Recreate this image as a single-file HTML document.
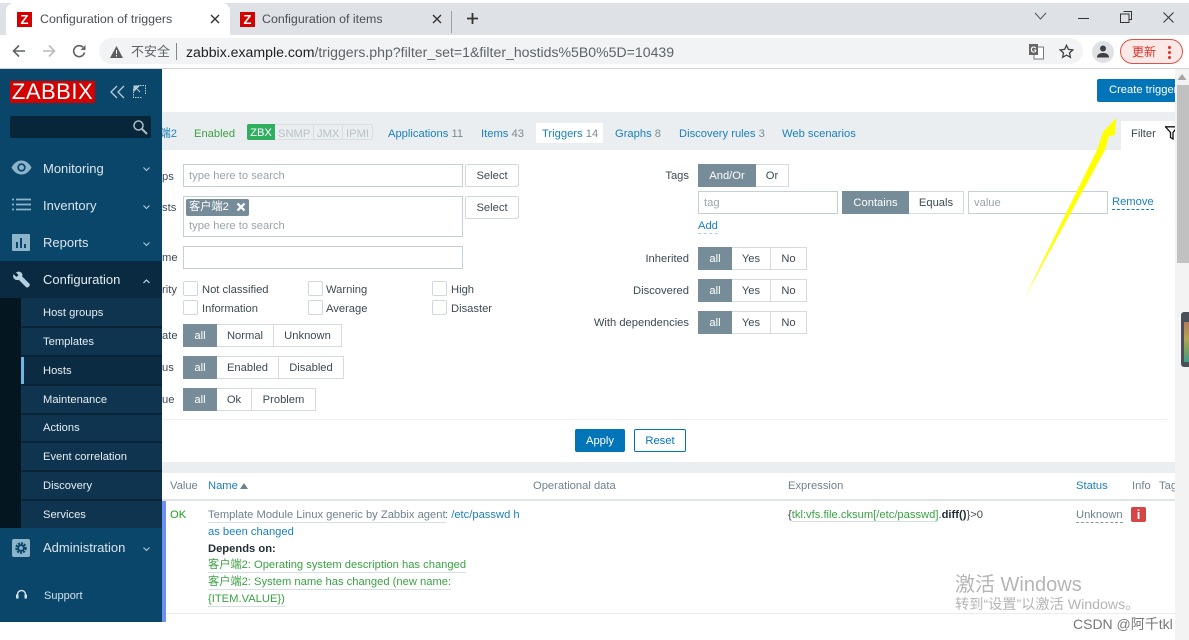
<!DOCTYPE html>
<html lang="zh">
<head>
<meta charset="utf-8">
<title>Configuration of triggers</title>
<style>
html,body{margin:0;padding:0;background:#fff;}
body{width:1189px;height:640px;position:relative;overflow:hidden;font-family:"Liberation Sans","Noto Sans CJK SC",sans-serif;font-size:11.2px;color:#1f2c33;}
.a{position:absolute;white-space:nowrap;}
.box{position:absolute;box-sizing:border-box;background:#fff;border:1px solid #c5d0d6;}
.ph{color:#9aa5ab;margin-top:1px;}
.lbl{position:absolute;white-space:nowrap;color:#3d4a52;line-height:14px;margin-top:1px;}
.seg{position:absolute;display:flex;height:23px;box-sizing:border-box;border-radius:2px;}
.seg span{box-sizing:border-box;height:23px;line-height:22px;text-align:center;border:1px solid #d4dce0;border-left:0;background:#fff;color:#3d4a52;}
.seg span.on{background:#768d99;border:1px solid #768d99;color:#fff;}
.btn{position:absolute;box-sizing:border-box;height:23px;line-height:22px;text-align:center;background:#fff;border:1px solid #cfd8dc;border-radius:2px;color:#3d4a52;}
.cb{position:absolute;box-sizing:border-box;width:15px;height:15px;background:#fff;border:1px solid #cfd8dc;border-radius:2px;}
.tabt{position:absolute;top:127px;line-height:14px;color:#1a80bd;white-space:nowrap;}
.tabt i{font-style:normal;color:#7d8b93;}
.m{position:absolute;left:43px;color:#dbe6ec;font-size:13px;line-height:16px;white-space:nowrap;}
.s{position:absolute;left:43px;color:#e6eef2;font-size:11.2px;line-height:14px;white-space:nowrap;}
.sb{position:absolute;left:21px;width:141px;height:2px;background:#0a2436;}
.th{position:absolute;top:479px;line-height:14px;color:#6f8290;white-space:nowrap;}
.gl{position:absolute;left:208px;color:#3aa243;line-height:14px;white-space:nowrap;border-bottom:1px solid #d6dfe3;}
</style>
</head>
<body>
<!-- browser tab strip -->
<div class="a" style="left:0;top:3px;width:1189px;height:32px;background:#dee1e6;"></div>
<div class="a" style="left:6px;top:3px;width:224px;height:32px;background:#fff;border-radius:8px 8px 0 0;"></div>
<div class="a" style="left:17px;top:12px;width:15px;height:15px;background:#d40000;color:#fff;font:bold 13px/15px 'Liberation Sans',sans-serif;text-align:center;">Z</div>
<div class="a" style="left:40px;top:12px;font-size:12.4px;line-height:14px;color:#4a4f55;">Configuration of triggers</div>
<svg class="a" style="left:210px;top:14px" width="10" height="10" viewBox="0 0 10 10"><path d="M1 1l8 8M9 1l-8 8" stroke="#333" stroke-width="1.4"/></svg>
<div class="a" style="left:240px;top:12px;width:15px;height:15px;background:#d40000;color:#fff;font:bold 13px/15px 'Liberation Sans',sans-serif;text-align:center;">Z</div>
<div class="a" style="left:262px;top:12px;font-size:12.4px;line-height:14px;color:#4a4f55;">Configuration of items</div>
<svg class="a" style="left:432px;top:14px" width="10" height="10" viewBox="0 0 10 10"><path d="M1 1l8 8M9 1l-8 8" stroke="#333" stroke-width="1.4"/></svg>
<div class="a" style="left:451px;top:11px;width:1px;height:22px;background:#9aa0a6;"></div>
<svg class="a" style="left:466px;top:12px" width="13" height="13" viewBox="0 0 13 13"><path d="M6.500 1v11M1 6.500h11" stroke="#333" stroke-width="1.800"/></svg>
<svg class="a" style="left:1034px;top:12px" width="13" height="9" viewBox="0 0 13 9"><path d="M1 1l5.500 6L12 1" fill="none" stroke="#555" stroke-width="1"/></svg>
<div class="a" style="left:1078px;top:18px;width:11px;height:1px;background:#333;"></div>
<svg class="a" style="left:1120px;top:11px" width="12" height="12" viewBox="0 0 12 12"><path d="M3.500 .5h8v8h-2M.5 3h8.500v8.500H.5z" fill="none" stroke="#333"/></svg>
<svg class="a" style="left:1163px;top:12px" width="11" height="11" viewBox="0 0 11 11"><path d="M.5 .5l10 10M10.500 .5l-10 10" stroke="#333" stroke-width="1"/></svg>

<!-- toolbar -->
<div class="a" style="left:0;top:35px;width:1189px;height:33px;background:#fff;"></div>
<div class="a" style="left:0;top:68px;width:1189px;height:1px;background:#d0d2d5;"></div>
<svg class="a" style="left:12px;top:44px" width="14" height="14" viewBox="0 0 14 14"><path d="M13 7H2M7 1.500L1.500 7 7 12.500" fill="none" stroke="#5f6368" stroke-width="1.600"/></svg>
<svg class="a" style="left:42px;top:44px" width="14" height="14" viewBox="0 0 14 14"><path d="M1 7h11M7 1.500L12.500 7 7 12.500" fill="none" stroke="#b8bbbf" stroke-width="1.600"/></svg>
<svg class="a" style="left:72px;top:44px" width="15" height="15" viewBox="0 0 15 15"><path d="M12.500 8.500A5.500 5.500 0 1 1 11 3.200" fill="none" stroke="#5f6368" stroke-width="1.600"/><path d="M13.500 1v5h-5z" fill="#5f6368"/></svg>
<div class="a" style="left:99px;top:38px;width:984px;height:26px;background:#f1f3f4;border-radius:13px;"></div>
<svg class="a" style="left:110px;top:46px" width="13" height="12" viewBox="0 0 13 12"><path d="M6.500 0L13 12H0z" fill="#5a5e63"/><path d="M6 4h1v4H6zM6 9h1v1.500H6z" fill="#fff"/></svg>
<div class="a" style="left:131px;top:44px;font-size:13px;line-height:16px;color:#5f6368;">不安全</div>
<div class="a" style="left:176px;top:43px;width:1px;height:17px;background:#80868b;"></div>
<div class="a" style="left:186px;top:43px;font-size:14.1px;line-height:18px;color:#5f6368;"><span style="color:#202124">zabbix.example.com</span>/triggers.php?filter_set=1&amp;filter_hostids%5B0%5D=10439</div>
<svg class="a" style="left:1029px;top:44px" width="15" height="16" viewBox="0 0 15 16"><rect x="5" y="3" width="9.500" height="12" fill="#fff" stroke="#777"/><rect x="0" y="0" width="9" height="11" fill="#666"/><text x="1.500" y="8.500" font-size="8" font-weight="bold" fill="#fff" font-family="Liberation Sans">G</text></svg>
<svg class="a" style="left:1059px;top:44px" width="15" height="15" viewBox="0 0 15 15"><path d="M7.500 1.300l1.900 4.100 4.400.5-3.300 3 .9 4.400-3.900-2.200-3.900 2.200.9-4.400-3.300-3 4.400-.5z" fill="none" stroke="#444" stroke-width="1.300"/></svg>
<div class="a" style="left:1092px;top:41px;width:22px;height:22px;border-radius:50%;background:#dfe1e5;"></div>
<svg class="a" style="left:1097px;top:45px" width="12" height="13" viewBox="0 0 12 13"><circle cx="6" cy="3.500" r="3" fill="#3c4043"/><path d="M0 12.500c0-3.500 3-4.500 6-4.500s6 1 6 4.500z" fill="#3c4043"/></svg>
<div class="a" style="left:1120px;top:39px;width:63px;height:25px;box-sizing:border-box;border:1px solid #d9534a;border-radius:13px;background:#fbe9e7;"></div>
<div class="a" style="left:1132px;top:44px;font-size:12px;line-height:16px;color:#d93025;">更新</div>
<div class="a" style="left:1168px;top:46px;width:3px;height:3px;border-radius:50%;background:#d93025;box-shadow:0 5px 0 #d93025,0 10px 0 #d93025;"></div>

<!-- top white area, filter header band -->
<div class="a" style="left:162px;top:112px;width:1013px;height:38px;background:#ebeef0;"></div>
<div class="a" style="left:1097px;top:79px;width:78px;height:23px;background:#0275b8;border-radius:2px 0 0 2px;"></div>
<div class="a" style="left:1097px;top:79px;width:78px;height:23px;overflow:hidden;"><span class="a" style="left:12px;top:4px;color:#fff;font-size:11.2px;line-height:14px;">Create trigger</span></div>

<div class="tabt" style="left:162px;color:#1a80bd;width:15px;overflow:hidden;direction:rtl;">端2</div>
<div class="tabt" style="left:194px;color:#3aa243;">Enabled</div>
<div class="a" style="left:247px;top:124px;width:126px;height:16px;box-sizing:border-box;border:1px solid #d8dee1;border-radius:2px;"></div>
<div class="a" style="left:247px;top:124px;width:28px;height:16px;background:#2fae5f;color:#fff;text-align:center;line-height:18px;border-radius:2px 0 0 2px;">ZBX</div>
<div class="a" style="left:278px;top:127px;line-height:14px;color:#b9c2c7;">SNMP</div>
<div class="a" style="left:313px;top:125px;width:1px;height:14px;background:#d8dee1;"></div>
<div class="a" style="left:317px;top:127px;line-height:14px;color:#b9c2c7;">JMX</div>
<div class="a" style="left:342px;top:125px;width:1px;height:14px;background:#d8dee1;"></div>
<div class="a" style="left:346px;top:127px;line-height:14px;color:#b9c2c7;">IPMI</div>
<div class="tabt" style="left:388px;">Applications <i>11</i></div>
<div class="tabt" style="left:481px;">Items <i>43</i></div>
<div class="a" style="left:536px;top:123px;width:67px;height:20px;background:#fff;"></div>
<div class="tabt" style="left:542px;">Triggers <i>14</i></div>
<div class="tabt" style="left:615px;">Graphs <i>8</i></div>
<div class="tabt" style="left:679px;">Discovery rules <i>3</i></div>
<div class="tabt" style="left:782px;">Web scenarios</div>
<div class="a" style="left:1121px;top:121px;width:54px;height:29px;background:#fff;"></div>
<div class="a" style="left:1131px;top:127px;line-height:14px;color:#3d4a52;">Filter</div>
<svg class="a" style="left:1165px;top:126px" width="10" height="14" viewBox="0 0 10 14"><path d="M.5 .8h12L8 6.500V13L5.500 11.500v-5z" fill="none" stroke="#111" stroke-width="1.300"/></svg>

<!-- filter left -->
<div class="lbl" style="left:162px;top:169px;">ps</div>
<div class="box" style="left:183px;top:164px;width:280px;height:23px;"></div>
<div class="a ph" style="left:189px;top:168px;line-height:14px;">type here to search</div>
<div class="btn" style="left:465px;top:164px;width:54px;">Select</div>
<div class="lbl" style="left:162px;top:200px;">sts</div>
<div class="box" style="left:183px;top:196px;width:280px;height:41px;"></div>
<div class="a" style="left:186px;top:199px;width:63px;height:17px;background:#768d99;border-radius:2px;color:#fff;line-height:16px;"><span style="margin-left:3px;">客户端2</span></div>
<svg class="a" style="left:236px;top:202px" width="10" height="10" viewBox="0 0 10 10"><path d="M1.500 1.500l7 7M8.500 1.500l-7 7" stroke="#fff" stroke-width="2.200"/></svg>
<div class="a ph" style="left:189px;top:218px;line-height:14px;">type here to search</div>
<div class="btn" style="left:465px;top:196px;width:54px;">Select</div>
<div class="lbl" style="left:162px;top:250px;">me</div>
<div class="box" style="left:183px;top:246px;width:280px;height:23px;"></div>
<div class="lbl" style="left:162px;top:282px;">rity</div>
<div class="cb" style="left:183px;top:281px;"></div><div class="lbl" style="left:202px;top:282px;">Not classified</div>
<div class="cb" style="left:308px;top:281px;"></div><div class="lbl" style="left:326px;top:282px;">Warning</div>
<div class="cb" style="left:432px;top:281px;"></div><div class="lbl" style="left:451px;top:282px;">High</div>
<div class="cb" style="left:183px;top:300px;"></div><div class="lbl" style="left:202px;top:301px;">Information</div>
<div class="cb" style="left:308px;top:300px;"></div><div class="lbl" style="left:326px;top:301px;">Average</div>
<div class="cb" style="left:432px;top:300px;"></div><div class="lbl" style="left:451px;top:301px;">Disaster</div>
<div class="lbl" style="left:162px;top:328px;">ate</div>
<div class="seg" style="left:183px;top:324px;"><span class="on" style="width:34px">all</span><span style="width:57px">Normal</span><span style="width:68px">Unknown</span></div>
<div class="lbl" style="left:162px;top:360px;">us</div>
<div class="seg" style="left:183px;top:356px;"><span class="on" style="width:34px">all</span><span style="width:62px">Enabled</span><span style="width:65px">Disabled</span></div>
<div class="lbl" style="left:162px;top:392px;">ue</div>
<div class="seg" style="left:183px;top:388px;"><span class="on" style="width:34px">all</span><span style="width:35px">Ok</span><span style="width:64px">Problem</span></div>

<!-- filter right -->
<div class="lbl" style="right:500px;top:168px;">Tags</div>
<div class="seg" style="left:698px;top:164px;"><span class="on" style="width:58px">And/Or</span><span style="width:33px">Or</span></div>
<div class="box" style="left:698px;top:191px;width:140px;height:23px;"></div>
<div class="a ph" style="left:704px;top:195px;line-height:14px;">tag</div>
<div class="seg" style="left:842px;top:191px;"><span class="on" style="width:67px">Contains</span><span style="width:55px">Equals</span></div>
<div class="box" style="left:968px;top:191px;width:140px;height:23px;"></div>
<div class="a ph" style="left:974px;top:195px;line-height:14px;">value</div>
<div class="a" style="left:1112px;top:195px;line-height:14px;color:#1a80bd;border-bottom:1px dashed #1a80bd;">Remove</div>
<div class="a" style="left:698px;top:219px;line-height:14px;color:#1a80bd;border-bottom:1px dashed #a9cfe6;">Add</div>
<div class="lbl" style="right:500px;top:251px;">Inherited</div>
<div class="seg" style="left:698px;top:247px;"><span class="on" style="width:34px">all</span><span style="width:39px">Yes</span><span style="width:36px">No</span></div>
<div class="lbl" style="right:500px;top:283px;">Discovered</div>
<div class="seg" style="left:698px;top:279px;"><span class="on" style="width:34px">all</span><span style="width:39px">Yes</span><span style="width:36px">No</span></div>
<div class="lbl" style="right:500px;top:315px;">With dependencies</div>
<div class="seg" style="left:698px;top:311px;"><span class="on" style="width:34px">all</span><span style="width:39px">Yes</span><span style="width:36px">No</span></div>

<div class="a" style="left:162px;top:419px;width:1005px;height:1px;background:#eef1f2;"></div>
<div class="a" style="left:575px;top:429px;width:50px;height:23px;background:#0275b8;border-radius:2px;color:#fff;text-align:center;line-height:24px;">Apply</div>
<div class="a" style="left:634px;top:429px;width:52px;height:23px;box-sizing:border-box;border:1px solid #0275b8;border-radius:2px;color:#0275b8;text-align:center;line-height:22px;">Reset</div>
<div class="a" style="left:162px;top:462px;width:1013px;height:11px;background:#ebeef0;"></div>

<!-- table -->
<div class="th" style="left:170px;">Value</div>
<div class="th" style="left:208px;color:#1a80bd;">Name</div>
<svg class="a" style="left:240px;top:483px" width="8" height="6" viewBox="0 0 8 6"><path d="M4 0l4 6H0z" fill="#6f8290"/></svg>
<div class="th" style="left:533px;">Operational data</div>
<div class="th" style="left:788px;">Expression</div>
<div class="th" style="left:1076px;color:#1a80bd;">Status</div>
<div class="th" style="left:1132px;">Info</div>
<div class="th" style="left:1159px;width:16px;overflow:hidden;">Tags</div>
<div class="a" style="left:162px;top:499px;width:1013px;height:2px;background:#dfe4e7;"></div>
<div class="a" style="left:162px;top:501px;width:4px;height:121px;background:#6d8ff0;"></div>
<div class="a" style="left:166px;top:613px;width:1009px;height:1px;background:#ebeef0;"></div>
<div class="a" style="left:170px;top:508px;line-height:14px;color:#1fa31f;">OK</div>
<div class="a" style="left:208px;top:508px;line-height:14px;color:#6f8290;border-bottom:1px solid #d6dfe3;">Template Module Linux generic by Zabbix agent</div>
<div class="a" style="left:445px;top:508px;line-height:14px;color:#1a80bd;">: /etc/passwd h</div>
<div class="a" style="left:208px;top:525px;line-height:14px;color:#1a80bd;">as been changed</div>
<div class="a" style="left:208px;top:542px;line-height:14px;font-weight:bold;color:#1f2c33;">Depends on:</div>
<div class="gl" style="top:558px;">客户端2: Operating system description has changed</div>
<div class="gl" style="top:575px;">客户端2: System name has changed (new name:</div>
<div class="gl" style="top:592px;">{ITEM.VALUE})</div>
<div class="a" style="left:788px;top:508px;line-height:14px;color:#3d4a52;font-size:11.2px;">{<span style="color:#3aa243;border-bottom:1px solid #d6dfe3;">tkl:vfs.file.cksum[/etc/passwd]</span>.<b style="color:#1f2c33">diff()</b>}&gt;0</div>
<div class="a" style="left:1076px;top:508px;line-height:14px;color:#6f8290;border-bottom:1px dashed #8a9aa3;">Unknown</div>
<div class="a" style="left:1131px;top:507px;width:15px;height:15px;background:#d64545;border-radius:2px;color:#fff;text-align:center;font:bold 13px/15px 'Liberation Sans',sans-serif;">i</div>

<!-- windows + csdn watermark -->
<div class="a" style="left:955px;top:573px;font-size:20px;line-height:24px;color:#b5b5b5;">激活 Windows</div>
<div class="a" style="left:955px;top:597px;font-size:14.2px;line-height:17px;color:#b5b5b5;">转到“设置”以激活 Windows。</div>
<div class="a" style="left:1073px;top:615px;font-size:14px;line-height:18px;color:#777;">CSDN @阿千tkl</div>
<div class="a" style="left:1179px;top:620px;width:6px;height:1px;background:#666;"></div>

<!-- scrollbar -->
<div class="a" style="left:1175px;top:69px;width:14px;height:571px;background:#f3f3f3;"></div>
<div class="a" style="left:1177px;top:85px;width:12px;height:178px;background:#c1c1c1;"></div>
<svg class="a" style="left:1177px;top:74px" width="10" height="6" viewBox="0 0 10 6"><path d="M5 0l4.500 6H.5z" fill="#a5a5a5"/></svg>
<div class="a" style="left:1181px;top:312px;width:8px;height:55px;background:#4a5058;border-radius:3px 0 0 3px;"></div>
<div class="a" style="left:1184px;top:322px;width:5px;height:40px;background:linear-gradient(#c9805a,#c9b24e 40%,#8fb05a 65%,#3cae97);opacity:.85;"></div>

<!-- arrow -->
<svg class="a" style="left:1020px;top:110px" width="105" height="195" viewBox="0 0 105 195"><path d="M96 8L95 25 89 26 85 40 5 187 77 40 81 28 83 22z" fill="#ffff00"/></svg>

<!-- sidebar -->
<div class="a" style="left:0;top:69px;width:162px;height:553px;background:#0a466a;"></div>
<div class="a" style="left:10px;top:81px;width:85px;height:22px;background:#d40000;color:#fff;font-size:22px;line-height:22px;text-align:center;letter-spacing:.5px;overflow:hidden;">ZABBIX</div>
<svg class="a" style="left:110px;top:85px" width="15" height="14" viewBox="0 0 15 14"><path d="M7 1L1 7l6 6M14 1L8 7l6 6" fill="none" stroke="#b9cdd9" stroke-width="1.300"/></svg>
<svg class="a" style="left:133px;top:85px" width="13" height="13" viewBox="0 0 13 13"><path d="M.5 4v8.500H9M12.500 9V.5H5" fill="none" stroke="#b9cdd9" stroke-dasharray="1.500 1"/><path d="M1 1h5L1 6zM2 2l5 5" fill="#b9cdd9" stroke="#b9cdd9"/></svg>
<div class="a" style="left:10px;top:116px;width:141px;height:22px;background:#08263a;border-radius:2px;"></div>
<svg class="a" style="left:132px;top:119px" width="16" height="16" viewBox="0 0 16 16"><circle cx="6.500" cy="6.500" r="4.500" fill="none" stroke="#a9bcc7" stroke-width="1.500"/><path d="M10 10l5 5" stroke="#a9bcc7" stroke-width="2"/></svg>

<svg class="a" style="left:11px;top:160px" width="21" height="15" viewBox="0 0 21 15"><path d="M.5 7.500C3 3 6.500.5 10.500.5s7.500 2.500 10 7c-2.500 4.500-6 7-10 7s-7.500-2.500-10-7z" fill="#8cb4cb"/><circle cx="10.500" cy="7.500" r="4.200" fill="#0a466a"/><circle cx="10.500" cy="7.500" r="2.500" fill="#8cb4cb"/></svg>
<div class="m" style="top:161px;">Monitoring</div>
<svg class="a" style="left:143px;top:167px" width="7" height="5" viewBox="0 0 7 5"><path d="M.5 .5l3 3 3-3" fill="none" stroke="#b9cdd9"/></svg>

<svg class="a" style="left:12px;top:198px" width="19" height="13" viewBox="0 0 19 13"><path d="M0 1.500h2M4 1.500h15M0 6.500h2M4 6.500h15M0 11.500h2M4 11.500h15" stroke="#8cb4cb" stroke-width="1.700"/></svg>
<div class="m" style="top:198px;">Inventory</div>
<svg class="a" style="left:143px;top:205px" width="7" height="5" viewBox="0 0 7 5"><path d="M.5 .5l3 3 3-3" fill="none" stroke="#b9cdd9"/></svg>

<svg class="a" style="left:12px;top:234px" width="18" height="17" viewBox="0 0 18 17"><rect width="18" height="17" rx="1" fill="#8cb4cb"/><path d="M4 8h2v6H4zM8 4h2v10H8zM12 10h2v4h-2z" fill="#0a466a"/></svg>
<div class="m" style="top:235px;">Reports</div>
<svg class="a" style="left:143px;top:242px" width="7" height="5" viewBox="0 0 7 5"><path d="M.5 .5l3 3 3-3" fill="none" stroke="#b9cdd9"/></svg>

<div class="a" style="left:0;top:261px;width:162px;height:37px;background:#092a40;"></div>
<svg class="a" style="left:12px;top:271px" width="18" height="18" viewBox="0 0 18 18"><path d="M4 1.500c2-1.500 5-1 6 1 .5 1 .5 2 .2 3l7 7c.8.800.8 2 0 2.800l-.6.600c-.8.800-2 .8-2.800 0l-7-7c-2.500.8-5-.5-5.600-3-.3-1 0-2 .3-2.700L4.500 6l2-2z" fill="#b5cfde"/></svg>
<div class="m" style="top:272px;color:#e4edf2;">Configuration</div>
<svg class="a" style="left:143px;top:279px" width="7" height="5" viewBox="0 0 7 5"><path d="M.5 4l3-3 3 3" fill="none" stroke="#dbe6ec"/></svg>

<div class="a" style="left:0;top:298px;width:21px;height:230px;background:#04161f;"></div>
<div class="a" style="left:21px;top:298px;width:141px;height:230px;background:#0e344f;"></div>
<div class="a" style="left:21px;top:356px;width:141px;height:28px;background:#0a2b41;"></div>
<div class="a" style="left:21px;top:356px;width:3px;height:28px;background:#6fb5e6;"></div>
<div class="sb" style="top:326px;"></div><div class="sb" style="top:355px;"></div><div class="sb" style="top:384px;"></div><div class="sb" style="top:413px;"></div><div class="sb" style="top:441px;"></div><div class="sb" style="top:470px;"></div><div class="sb" style="top:499px;"></div>
<div class="s" style="top:306px;">Host groups</div>
<div class="s" style="top:335px;">Templates</div>
<div class="s" style="top:364px;">Hosts</div>
<div class="s" style="top:393px;">Maintenance</div>
<div class="s" style="top:421px;">Actions</div>
<div class="s" style="top:450px;">Event correlation</div>
<div class="s" style="top:479px;">Discovery</div>
<div class="s" style="top:508px;">Services</div>

<svg class="a" style="left:12px;top:539px" width="18" height="18" viewBox="0 0 18 18"><rect width="18" height="18" rx="2" fill="#8cb4cb"/><circle cx="9" cy="9" r="4.500" fill="none" stroke="#0a466a" stroke-width="2.500" stroke-dasharray="2 1"/><circle cx="9" cy="9" r="2.800" fill="none" stroke="#0a466a" stroke-width="1.800"/></svg>
<div class="m" style="top:540px;">Administration</div>
<svg class="a" style="left:143px;top:547px" width="7" height="5" viewBox="0 0 7 5"><path d="M.5 .5l3 3 3-3" fill="none" stroke="#b9cdd9"/></svg>
<svg class="a" style="left:16px;top:589px" width="11" height="12" viewBox="0 0 11 12"><path d="M1.500 8V5.500a4 4 0 0 1 8 0V8" fill="none" stroke="#d5e2ea" stroke-width="1.400"/><rect x="0" y="5.500" width="2.500" height="4" fill="#d5e2ea"/><rect x="8.500" y="5.500" width="2.500" height="4" fill="#d5e2ea"/></svg>
<div class="s" style="top:589px;left:44px;font-size:11px;color:#d5e2ea;">Support</div>
</body>
</html>
